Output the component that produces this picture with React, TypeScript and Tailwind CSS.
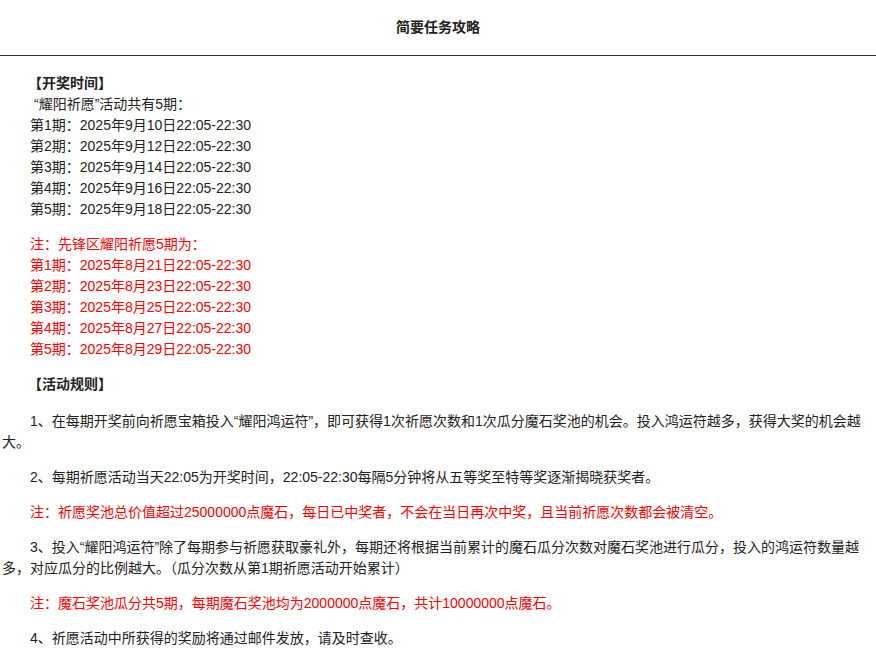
export default function App() {
  const dates = ["9月10日", "9月12日", "9月14日", "9月16日", "9月18日"]
  const early = ["8月21日", "8月23日", "8月25日", "8月27日", "8月29日"]
  return (
    <div className="w-[876px] h-[664px] overflow-hidden bg-white text-[14px] leading-[21px] text-[#222]" style={{ fontFamily: '"Liberation Sans", "Noto Sans CJK SC", sans-serif' }}>
      <div className="h-[56px] border-b border-[#333] flex items-center justify-center font-bold">简要任务攻略</div>
      <div className="pt-[17px] pr-3">
        <div className="pl-[28px] font-bold">【开奖时间】</div>
        <div className="pl-[34px]">“耀阳祈愿”活动共有5期：</div>
        {dates.map((d, i) => (
          <div key={d} className="pl-[30px]">第{i + 1}期：2025年{d}22:05-22:30</div>
        ))}
        <div className="h-[14px]" />
        <div className="pl-[30px] text-[#ff0000]">注：先锋区耀阳祈愿5期为：</div>
        {early.map((d, i) => (
          <div key={d} className="pl-[30px] text-[#ff0000]">第{i + 1}期：2025年{d}22:05-22:30</div>
        ))}
        <div className="mt-[14px] pl-[28px] font-bold">【活动规则】</div>
        <div className="pl-[2px] flex flex-col gap-[14px] mt-[16px]">
          <p className="indent-[28px]">1、在每期开奖前向祈愿宝箱投入“耀阳鸿运符”，即可获得1次祈愿次数和1次瓜分魔石奖池的机会。投入鸿运符越多，获得大奖的机会越大。</p>
          <p className="indent-[28px]">2、每期祈愿活动当天22:05为开奖时间，22:05-22:30每隔5分钟将从五等奖至特等奖逐渐揭晓获奖者。</p>
          <p className="indent-[28px] text-[#ff0000]">注：祈愿奖池总价值超过25000000点魔石，每日已中奖者，不会在当日再次中奖，且当前祈愿次数都会被清空。</p>
          <p className="indent-[28px]">3、投入“耀阳鸿运符”除了每期参与祈愿获取豪礼外，每期还将根据当前累计的魔石瓜分次数对魔石奖池进行瓜分，投入的鸿运符数量越多，对应瓜分的比例越大。（瓜分次数从第1期祈愿活动开始累计）</p>
          <p className="indent-[28px] text-[#ff0000]">注：魔石奖池瓜分共5期，每期魔石奖池均为2000000点魔石，共计10000000点魔石。</p>
          <p className="indent-[28px]">4、祈愿活动中所获得的奖励将通过邮件发放，请及时查收。</p>
        </div>
      </div>
    </div>
  )
}
